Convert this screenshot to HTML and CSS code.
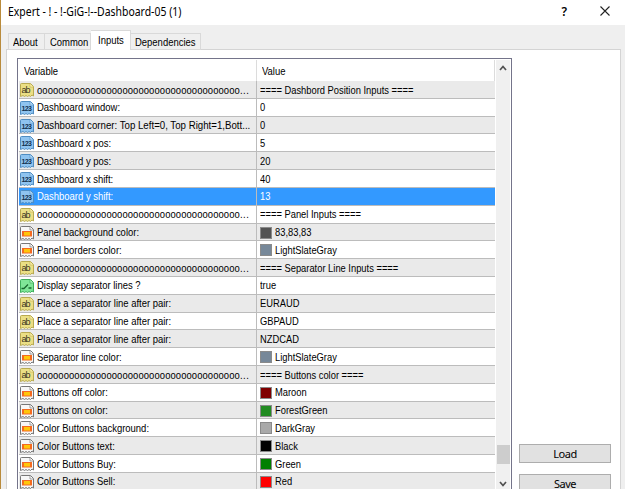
FILE: index.html
```html
<!DOCTYPE html>
<html lang="en">
<head>
  <meta charset="UTF-8">
  <title>Expert - ! - !-GiG-!--Dashboard-05 (1)</title>
  <link rel="stylesheet" href="styles.css">
</head>
<body>
  <!-- Icon shapes shared by the rows -->
  <svg class="defs" width="0" height="0">
    <symbol id="ab" viewBox="0 0 14 14">
      <path d="M.5 1.5Q.5.5 1.5.5H10.5L13.5 3.5V13L12 12L10.5 13.5L9 12.5L7.5 13.5L6 12.5L4.500 13.500L3 12.500L.5 13.500Z" fill="#ebdf85" stroke="#b9aa50"/>
      <path d="M10 1V4H13" fill="#fff7b5" stroke="#c5b65c" stroke-width=".7"/>
      <text x="1.500" y="9.800" font-size="9" textLength="9" fill="#39351c">ab</text>
    </symbol>
    <symbol id="num" viewBox="0 0 14 14">
      <path d="M.5 1.5Q.5.5 1.5.5H10.5L13.5 3.5V13L12 12L10.5 13.5L9 12.5L7.5 13.5L6 12.5L4.500 13.500L3 12.500L.5 13.500Z" fill="#8fc4f0" stroke="#4f8dc2"/>
      <path d="M10 1V4H13" fill="#c5e3fb" stroke="#5b98cb" stroke-width=".7"/>
      <text x="1.500" y="10" font-size="7" font-weight="bold" textLength="10.500" fill="#12304f">123</text>
    </symbol>
    <symbol id="color" viewBox="0 0 14 14">
      <path d="M.5 1.5Q.5.5 1.5.5H10.5L13.5 3.5V13L12 12L10.5 13.5L9 12.5L7.5 13.5L6 12.5L4.500 13.500L3 12.500L.5 13.500Z" fill="#f7f7f7" stroke="#777"/>
      <path d="M10 1V4H13" fill="#fff" stroke="#777" stroke-width=".7"/>
      <rect x="2" y="5" width="10" height="5.500" fill="#f46a20"/>
      <rect x="4" y="6" width="6" height="3.500" fill="#ffc70a"/>
    </symbol>
    <symbol id="bool" viewBox="0 0 14 14">
      <path d="M.5 1.5Q.5.5 1.5.5H10.5L13.5 3.5V13L12 12L10.5 13.5L9 12.5L7.5 13.5L6 12.5L4.500 13.500L3 12.500L.5 13.500Z" fill="#7fe698" stroke="#3fae5c"/>
      <path d="M10 1V4H13" fill="#c0f8cb" stroke="#3fae5c" stroke-width=".7"/>
      <path d="M1.500 9.500H4L8 5.500M8.500 9H11.500" fill="none" stroke="#17672e" stroke-width="1.300"/>
    </symbol>
  </svg>

  <div class="window">
    <header class="titlebar">
      <span class="title">Expert - ! - !-GiG-!--Dashboard-05 (1)</span>
      <span class="help">?</span>
      <svg class="close" width="10" height="10" viewBox="0 0 10 10"><path d="M.5.5L9.500 9.500M9.500.5L.5 9.500" stroke="#222" stroke-width="1.100"/></svg>
    </header>

    <nav class="tabs">
      <div class="tab about"><span class="text">About</span></div>
      <div class="tab common"><span class="text">Common</span></div>
      <div class="tab inputs active"><span class="text">Inputs</span></div>
      <div class="tab dependencies"><span class="text">Dependencies</span></div>
    </nav>

    <main class="page">
      <div class="list">
        <div class="table">
          <div class="head"><div class="var"><span class="text">Variable</span></div><div class="val"><span class="text">Value</span></div></div>
          <div class="row"><div class="var"><svg class="icon"><use href="#ab"/></svg><span class="text dots">oooooooooooooooooooooooooooooooooooooo<b>...</b></span></div><div class="val"><span class="text">==== Dashbord Position Inputs ====</span></div></div>
          <div class="row"><div class="var"><svg class="icon"><use href="#num"/></svg><span class="text">Dashboard window:</span></div><div class="val"><span class="text">0</span></div></div>
          <div class="row"><div class="var"><svg class="icon"><use href="#num"/></svg><span class="text long">Dashboard corner: Top Left=0, Top Right=1,Bott...</span></div><div class="val"><span class="text">0</span></div></div>
          <div class="row"><div class="var"><svg class="icon"><use href="#num"/></svg><span class="text">Dashboard x pos:</span></div><div class="val"><span class="text">5</span></div></div>
          <div class="row"><div class="var"><svg class="icon"><use href="#num"/></svg><span class="text">Dashboard y pos:</span></div><div class="val"><span class="text">20</span></div></div>
          <div class="row"><div class="var"><svg class="icon"><use href="#num"/></svg><span class="text">Dashboard x shift:</span></div><div class="val"><span class="text">40</span></div></div>
          <div class="row selected"><div class="var"><svg class="icon"><use href="#num"/></svg><span class="text">Dashboard y shift:</span></div><div class="val"><span class="text">13</span></div></div>
          <div class="row"><div class="var"><svg class="icon"><use href="#ab"/></svg><span class="text dots">oooooooooooooooooooooooooooooooooooooo<b>...</b></span></div><div class="val"><span class="text">==== Panel Inputs ====</span></div></div>
          <div class="row"><div class="var"><svg class="icon"><use href="#color"/></svg><span class="text">Panel background color:</span></div><div class="val"><i class="swatch gray83"></i><span class="text">83,83,83</span></div></div>
          <div class="row"><div class="var"><svg class="icon"><use href="#color"/></svg><span class="text">Panel borders color:</span></div><div class="val"><i class="swatch slate"></i><span class="text">LightSlateGray</span></div></div>
          <div class="row"><div class="var"><svg class="icon"><use href="#ab"/></svg><span class="text dots">oooooooooooooooooooooooooooooooooooooo<b>...</b></span></div><div class="val"><span class="text">==== Separator Line Inputs ====</span></div></div>
          <div class="row"><div class="var"><svg class="icon"><use href="#bool"/></svg><span class="text">Display separator lines ?</span></div><div class="val"><span class="text">true</span></div></div>
          <div class="row"><div class="var"><svg class="icon"><use href="#ab"/></svg><span class="text">Place a separator line after pair:</span></div><div class="val"><span class="text">EURAUD</span></div></div>
          <div class="row"><div class="var"><svg class="icon"><use href="#ab"/></svg><span class="text">Place a separator line after pair:</span></div><div class="val"><span class="text">GBPAUD</span></div></div>
          <div class="row"><div class="var"><svg class="icon"><use href="#ab"/></svg><span class="text">Place a separator line after pair:</span></div><div class="val"><span class="text">NZDCAD</span></div></div>
          <div class="row"><div class="var"><svg class="icon"><use href="#color"/></svg><span class="text">Separator line color:</span></div><div class="val"><i class="swatch slate"></i><span class="text">LightSlateGray</span></div></div>
          <div class="row"><div class="var"><svg class="icon"><use href="#ab"/></svg><span class="text dots">oooooooooooooooooooooooooooooooooooooo<b>...</b></span></div><div class="val"><span class="text">==== Buttons color ====</span></div></div>
          <div class="row"><div class="var"><svg class="icon"><use href="#color"/></svg><span class="text">Buttons off color:</span></div><div class="val"><i class="swatch maroon"></i><span class="text">Maroon</span></div></div>
          <div class="row"><div class="var"><svg class="icon"><use href="#color"/></svg><span class="text">Buttons on color:</span></div><div class="val"><i class="swatch forest"></i><span class="text">ForestGreen</span></div></div>
          <div class="row"><div class="var"><svg class="icon"><use href="#color"/></svg><span class="text">Color Buttons background:</span></div><div class="val"><i class="swatch darkgray"></i><span class="text">DarkGray</span></div></div>
          <div class="row"><div class="var"><svg class="icon"><use href="#color"/></svg><span class="text">Color Buttons text:</span></div><div class="val"><i class="swatch black"></i><span class="text">Black</span></div></div>
          <div class="row"><div class="var"><svg class="icon"><use href="#color"/></svg><span class="text">Color Buttons Buy:</span></div><div class="val"><i class="swatch green"></i><span class="text">Green</span></div></div>
          <div class="row"><div class="var"><svg class="icon"><use href="#color"/></svg><span class="text">Color Buttons Sell:</span></div><div class="val"><i class="swatch red"></i><span class="text">Red</span></div></div>
        </div>

        <div class="scrollbar">
          <svg width="8" height="6" viewBox="0 0 8 6"><path d="M1 5L4 1.500L7 5" fill="none" stroke="#505050" stroke-width="1.700"/></svg>
          <div class="thumb"></div>
          <svg width="8" height="6" viewBox="0 0 8 6"><path d="M1 1L4 4.500L7 1" fill="none" stroke="#505050" stroke-width="1.700"/></svg>
        </div>
      </div>

      <div class="buttons">
        <button>Load</button>
        <button>Save</button>
      </div>
    </main>
  </div>
</body>
</html>
```
FILE: styles.css
```css
* {
  box-sizing: border-box;
}

body {
  margin: 0;
  height: 489px;
  overflow: hidden;
  background: #efefef;
  color: #000;
  font-family: "Liberation Sans", Arial, sans-serif;
  font-size: 11px;
}

.defs {
  display: none;
}

.window {
  height: 489px;
  border-left: 1px solid #b98b3c;
  overflow: hidden;
}

/* Condensed dialog lettering */
.text {
  display: inline-block;
  transform: scaleX(0.86);
  transform-origin: left center;
  white-space: pre;
}

.text.long {
  transform: scaleX(0.88);
}

.text.dots {
  letter-spacing: 0.09px;
}

.dots b {
  font-weight: normal;
  letter-spacing: 0.7px;
}

.titlebar {
  display: flex;
  align-items: center;
  height: 25px;
  padding: 0 15px 3px 7px;
  background: #fff;
  font-family: "Noto Sans", sans-serif;
}

.title {
  flex: 1;
  font-size: 12px;
  transform: scaleX(0.87);
  transform-origin: left center;
}

.help {
  margin-right: 33px;
  font-size: 12px;
  font-weight: 600;
}

/* Tabs */
.tabs {
  display: flex;
  align-items: flex-end;
  height: 25px;
  padding-left: 7px;
  position: relative;
}

.tab {
  height: 17px;
  padding-left: 5px;
  border: 1px solid #d9d9d9;
  border-left: none;
  line-height: 16px;
  white-space: nowrap;
}

.about {
  width: 37px;
  padding-left: 4px;
  border-left: 1px solid #d9d9d9;
}

.common {
  width: 46px;
}

.dependencies {
  width: 70px;
  padding-left: 4px;
}

.tab.active {
  width: 40px;
  height: 20px;
  padding-left: 7px;
  border-bottom: none;
  background: #fff;
  line-height: 18px;
}

.page {
  display: flex;
  height: 450px;
  margin: -1px 4px 0 5px;
  padding: 8px 0 0 10px;
  border: 1px solid #d4d4d4;
  background: #fff;
}

/* Variable list */
.list {
  display: flex;
  width: 495px;
  height: 450px;
  padding: 1px 1px 0;
  border: 1px solid #74748a;
}

.table {
  width: 477px;
}

.head,
.row {
  display: flex;
}

.head {
  height: 21px;
  border-right: 1px solid #dcdcdc;
  line-height: 20px;
}

.row {
  height: 17.82px;
  border-bottom: 1px solid #bcbcbc;
  line-height: 17px;
}

.row:nth-child(even) {
  background: #eaeaea;
}

.row.selected {
  background: #3399ff;
  color: #fff;
}

.var {
  display: flex;
  align-items: center;
  flex: none;
  width: 238px;
  border-right: 1px solid #bcbcbc;
}

.val {
  display: flex;
  align-items: center;
  padding-left: 3px;
}

.row .var,
.row .val {
  padding-top: 1.2px;
}

.row .val .text {
  transform: scaleX(0.85);
}

.head .var,
.head .val {
  padding-left: 5px;
}

.head .var {
  border-color: #dcdcdc;
}

.icon {
  flex-shrink: 0;
  width: 14px;
  height: 14px;
  margin: 0 3px 0 1px;
}

.swatch {
  width: 12px;
  height: 12px;
  margin: 0 3px 0 0;
  border: 1px solid #8a8a8a;
}

.gray83 { background: #535353; }
.slate { background: #778899; }
.maroon { background: #800000; }
.forest { background: #228b22; }
.darkgray { background: #a9a9a9; }
.black { background: #000; }
.green { background: #008000; }
.red { background: #f00; }

.scrollbar {
  display: flex;
  flex-direction: column;
  align-items: center;
  width: 14px;
  margin-left: 1px;
  padding-top: 5px;
  background: #f0f0f0;
}

.thumb {
  width: 13px;
  height: 19px;
  margin: 374px 0 17px;
  background: #cdcdcd;
}

/* Side buttons */
.buttons {
  display: flex;
  flex-direction: column;
  gap: 11px;
  margin: 386px 0 0 7px;
}

button {
  width: 92px;
  height: 19px;
  padding: 0;
  border: 1px solid #adadad;
  background: #e1e1e1;
  color: #000;
  font-family: "Noto Sans", sans-serif;
  font-size: 11px;
  line-height: 17px;
  letter-spacing: -0.5px;
}
```
